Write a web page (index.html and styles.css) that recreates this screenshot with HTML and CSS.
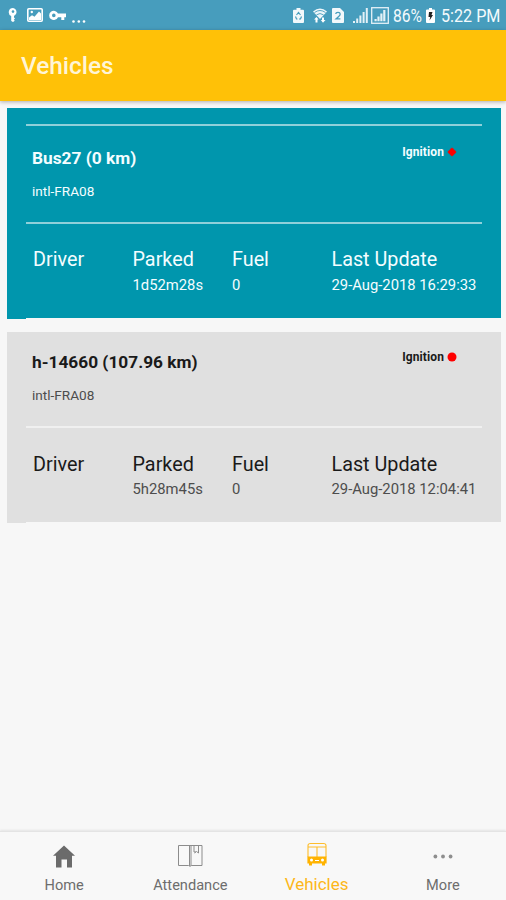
FILE: index.html
```html
<!DOCTYPE html>
<html lang="en">
<head>
<meta charset="utf-8">
<title>Vehicles</title>
<link rel="stylesheet" href="styles.css">
</head>
<body>
<div class="screen">
  <div class="status">
    <div class="status-left">
      <svg class="i-pin" width="10" height="14" viewBox="0 0 10 14"><path d="M5 0a4.2 4.2 0 0 0-1.8 8v5l1.8 1 1.8-1.2-1-1.1 1.2-1.2-1-1V8A4.2 4.2 0 0 0 5 0z" fill="#fff"/><circle cx="5" cy="3.6" r="1.3" fill="#479dbd"/></svg>
      <svg class="i-image" width="16" height="14" viewBox="0 0 16 14"><rect x=".8" y=".8" width="14.4" height="12.4" rx="1" fill="none" stroke="#fff" stroke-width="1.6"/><path d="M2 12V9.5l3-2.3 2.5 1.5L12 3.5l2 2V12z" fill="#fff"/><circle cx="4.8" cy="4" r="1.2" fill="#fff"/></svg>
      <svg class="i-key" width="17" height="11" viewBox="0 0 17 11"><path d="M9 3.6h8v3.6h-1.7V10h-3V7.2H9A4.6 4.6 0 1 1 9 3.6zM4.8 3.6a1.8 1.8 0 1 0 0 3.6 1.8 1.8 0 0 0 0-3.6z" fill="#fff" fill-rule="evenodd"/></svg>
      <svg class="i-dots" width="14" height="3" viewBox="0 0 14 3" fill="#fff"><circle cx="1.5" cy="1.5" r="1.3"/><circle cx="6.8" cy="1.5" r="1.3"/><circle cx="12" cy="1.5" r="1.3"/></svg>
    </div>
    <div class="status-right">
      <svg class="i-saver" width="11" height="15" viewBox="0 0 11 15"><path d="M3.5 0h4v1.700H10q1 0 1 1V14q0 1-1 1H1q-1 0-1-1V2.700q0-1 1-1h2.500z" fill="#f2f8fb"/><path d="M3.500 7l2-2.500 2 2.500M8.500 8.500l-1 2.500H6M2.500 8.500l1 2.500h1" fill="none" stroke="#479dbd" stroke-width="1.200"/></svg>
      <svg class="i-wifi" width="14" height="15" viewBox="0 0 14 15"><path d="M0 3.500Q7-2.500 14 3.500L7 11z" fill="#eef6fa"/><path d="M1.500 4.500q5.500-4 11 0M3.500 6.800q3.500-2.500 7 0" fill="none" stroke="#479dbd" stroke-width=".9"/><path d="M2.500 14.500v-3l-1.500 0 2.500-2.500 2 2.500h-1v3zM9 9.500h2v2.500h1.500L10 14.800 7.800 12H9z" fill="#fff"/></svg>
      <svg class="i-sim" width="12" height="15" viewBox="0 0 12 15"><path d="M0 1q0-1 1-1h7l4 4v10q0 1-1 1H1q-1 0-1-1z" fill="#f2f8fb"/><path d="M3.700 6q.2-1.700 2.300-1.700T8.200 6q0 1.200-1.500 2.400L4 10.900h4.400" fill="none" stroke="#479dbd" stroke-width="1.300"/></svg>
      <svg class="i-signal" width="15" height="15" viewBox="0 0 15 15" fill="#e4f1f7"><path d="M0 13h2v2H0zM3.200 10.500h2V15h-2zM6.400 7.500h2V15h-2zM9.600 4h2v11h-2zM12.800 0h2v15h-2z"/></svg>
      <svg class="i-signal2" width="18" height="17" viewBox="0 0 18 17"><rect x=".7" y=".7" width="16.600" height="15.600" fill="none" stroke="#e4f1f7" stroke-width="1.300"/><path d="M3.500 12h2.200v2.300H3.500zM6.400 9.500h2.200v4.800H6.400zM9.300 6.500h2.200v7.800H9.300zM12.200 3h2.200v11.300h-2.200z" fill="#e4f1f7"/></svg>
      <span class="pct">86%</span>
      <svg class="i-batt" width="9" height="15" viewBox="0 0 9 15"><path d="M3 0h3v1.500h2q1 0 1 1V14q0 1-1 1H1q-1 0-1-1V2.500q0-1 1-1h2z" fill="#fff"/><path d="M3 4h3.500L5.500 7H7l-3.500 5.500L4.200 9H2.500z" fill="#222"/></svg>
      <span class="time">5:22 PM</span>
    </div>
  </div>
  <header class="appbar"><h1>Vehicles</h1></header>
  <main class="list">
    <section class="card active">
      <div class="lead"></div>
      <div class="head">
        <div><h2>Bus27 (0 km)</h2><p class="org">intl-FRA08</p></div>
        <div class="ign"><span>Ignition</span><svg width="10" height="10" viewBox="0 0 10 10"><path d="M5 .9Q7.200 2.500 9.100 5 7.200 7.500 5 9.100 2.800 7.500.9 5 2.800 2.500 5 .9z" fill="#f00" stroke="#f00" stroke-width=".8"/></svg></div>
      </div>
      <div class="grid">
        <div><h3>Driver</h3></div>
        <div><h3>Parked</h3><p>1d52m28s</p></div>
        <div><h3>Fuel</h3><p>0</p></div>
        <div><h3>Last Update</h3><p>29-Aug-2018 16:29:33</p></div>
      </div>
      <div class="end"></div>
    </section>
    <section class="card idle">
      <div class="head">
        <div><h2>h-14660 (107.96 km)</h2><p class="org">intl-FRA08</p></div>
        <div class="ign"><span>Ignition</span><svg width="10" height="10" viewBox="0 0 10 10"><circle cx="5" cy="5" r="4.500" fill="#f00"/></svg></div>
      </div>
      <div class="grid">
        <div><h3>Driver</h3></div>
        <div><h3>Parked</h3><p>5h28m45s</p></div>
        <div><h3>Fuel</h3><p>0</p></div>
        <div><h3>Last Update</h3><p>29-Aug-2018 12:04:41</p></div>
      </div>
      <div class="end"></div>
    </section>
  </main>
  <nav class="tabs">
    <a class="tab"><svg width="24" height="24" viewBox="0 0 24 24"><path d="M12 1.500l11 10.300h-3V23.500h-5v-8H9.500v8H4V11.800H1z" fill="#6b6b6b"/></svg><span>Home</span></a>
    <a class="tab"><svg width="26" height="24" viewBox="0 0 26 24" fill="none" stroke="#8c8c8c"><path d="M1.500 1.500h23.500v20H14.500l-1.500.8-1.500-.8h-10zM12.500 2v20M14 2v20" stroke-width="1"/><path d="M17 2v6h2M21.500 2v7l-2-1.500-2 1.500" stroke-width="1"/></svg><span>Attendance</span></a>
    <a class="tab on"><svg width="20" height="24" viewBox="0 0 20 24"><path d="M1 15V3.500Q1 1.500 3.500 1.500h13q2.500 0 2.500 2V15M1 5h18M10 5v10" fill="none" stroke="#fdbd2c" stroke-width="1.100"/><path d="M.4 14.500h19.200v7H18V23.500h-3v-2H5v2H2v-2H.4z" fill="#ffb300"/><circle cx="4.500" cy="18" r="1.500" fill="#fff"/><circle cx="15.500" cy="18" r="1.500" fill="#fff"/><path d="M8 18.500h4" stroke="#fff"/></svg><span>Vehicles</span></a>
    <a class="tab"><svg width="20" height="24" viewBox="0 0 20 24" fill="#8e8e8e"><circle cx="2.400" cy="12.500" r="1.900"/><circle cx="10" cy="12.500" r="1.900"/><circle cx="17.600" cy="12.500" r="1.900"/></svg><span>More</span></a>
  </nav>
</div>
</body>
</html>
```
FILE: styles.css
```css
* { box-sizing: border-box; }
body, h1, h2, h3, p { margin: 0; }
body { font-family: Roboto, "Liberation Sans", sans-serif; }
.screen { width: 506px; height: 900px; display: flex; flex-direction: column; background: #f7f7f7; overflow: hidden; }

.status { height: 30px; flex: none; display: flex; justify-content: space-between; background: #479dbd; color: #f4fafc; }
.status-left, .status-right { display: flex; align-items: center; }
.status-left { padding-left: 8px; }
.i-image { margin-left: 9px; }
.i-key { margin-left: 6px; }
.i-dots { margin: 12px 0 0 6px; }
.status-right { padding-right: 6px; }
.i-wifi { margin-left: 9px; }
.i-sim { margin-left: 5px; }
.i-signal { margin-left: 9px; }
.i-signal2 { margin-left: 3px; }
.pct, .time { font-size: 19px; line-height: 30px; white-space: nowrap; padding-top: 2px; transform-origin: 0 50%; }
.pct { width: 29px; margin-left: 4px; transform: scaleX(.82); }
.i-batt { margin-left: 4px; }
.time { width: 59px; margin-left: 6px; transform: scaleX(.85); }

.appbar { height: 71px; flex: none; padding: 21px 0 0 21px; background: #ffc107; color: #fff5d6; box-shadow: 0 1px 4px rgba(0,0,0,.3); z-index: 1; }
h1 { font-size: 24.4px; line-height: 30px; font-weight: 500; }

.list { flex: 1; padding: 7px 5px 0 7px; display: flex; flex-direction: column; gap: 13px; }
.card { padding-left: 19px; }
.active { height: 211px; background: #0096ad; color: #f4fdff; }
.idle { height: 191px; background: #e0e0e0; color: #1a1a1a; }
.lead { height: 18px; margin-right: 19px; border-bottom: 2px solid #8fd0da; }
.head { height: 98px; margin-right: 19px; padding-left: 6px; display: flex; justify-content: space-between; border-bottom: 2px solid #8fd0da; }
.idle .head { height: 96px; border-bottom: 2px solid #f0f0f0; }
.active .head { padding-top: 1px; }
h2 { margin-top: 20px; font-size: 17.3px; line-height: 22px; font-weight: 700; white-space: nowrap; }
.idle h2 { margin-top: 19px; }
.org { margin-top: 13px; font-size: 13.6px; line-height: 18px; }
.idle .org, .idle .grid p { color: #4d4d4d; }
.ign { height: 12px; margin: 19px 25px 0 0; display: flex; align-items: center; gap: 3px; font-size: 12px; letter-spacing: .1px; font-weight: 700; }
.grid { height: 94px; padding: 24px 0 0 7px; display: grid; grid-template-columns: 99.5px 99.5px 99.5px 1fr; }
.idle .grid { padding-top: 25px; }
h3 { font-size: 19.8px; line-height: 24px; font-weight: 400; white-space: nowrap; }
.grid p { margin-top: 4px; font-size: 14.8px; line-height: 18px; white-space: nowrap; }
.idle .grid p { margin-top: 3px; }
.end { height: 1px; background: #f7f7f7; }

.tabs { height: 69px; flex: none; display: grid; grid-template-columns: repeat(4, 1fr); padding: 12px 0 0 1px; background: #f8f8f8; border-top: 1px solid #e4e4e4; box-shadow: 0 -1px 2px rgba(0,0,0,.08); }
.tab { display: flex; flex-direction: column; align-items: center; color: #6d6d6d; font-size: 14.6px; line-height: 18px; }
.tab span { margin-top: 8px; }
.on { color: #fdb719; font-size: 17px; margin-top: -2px; }
.on span { margin-top: 9px; }
```
